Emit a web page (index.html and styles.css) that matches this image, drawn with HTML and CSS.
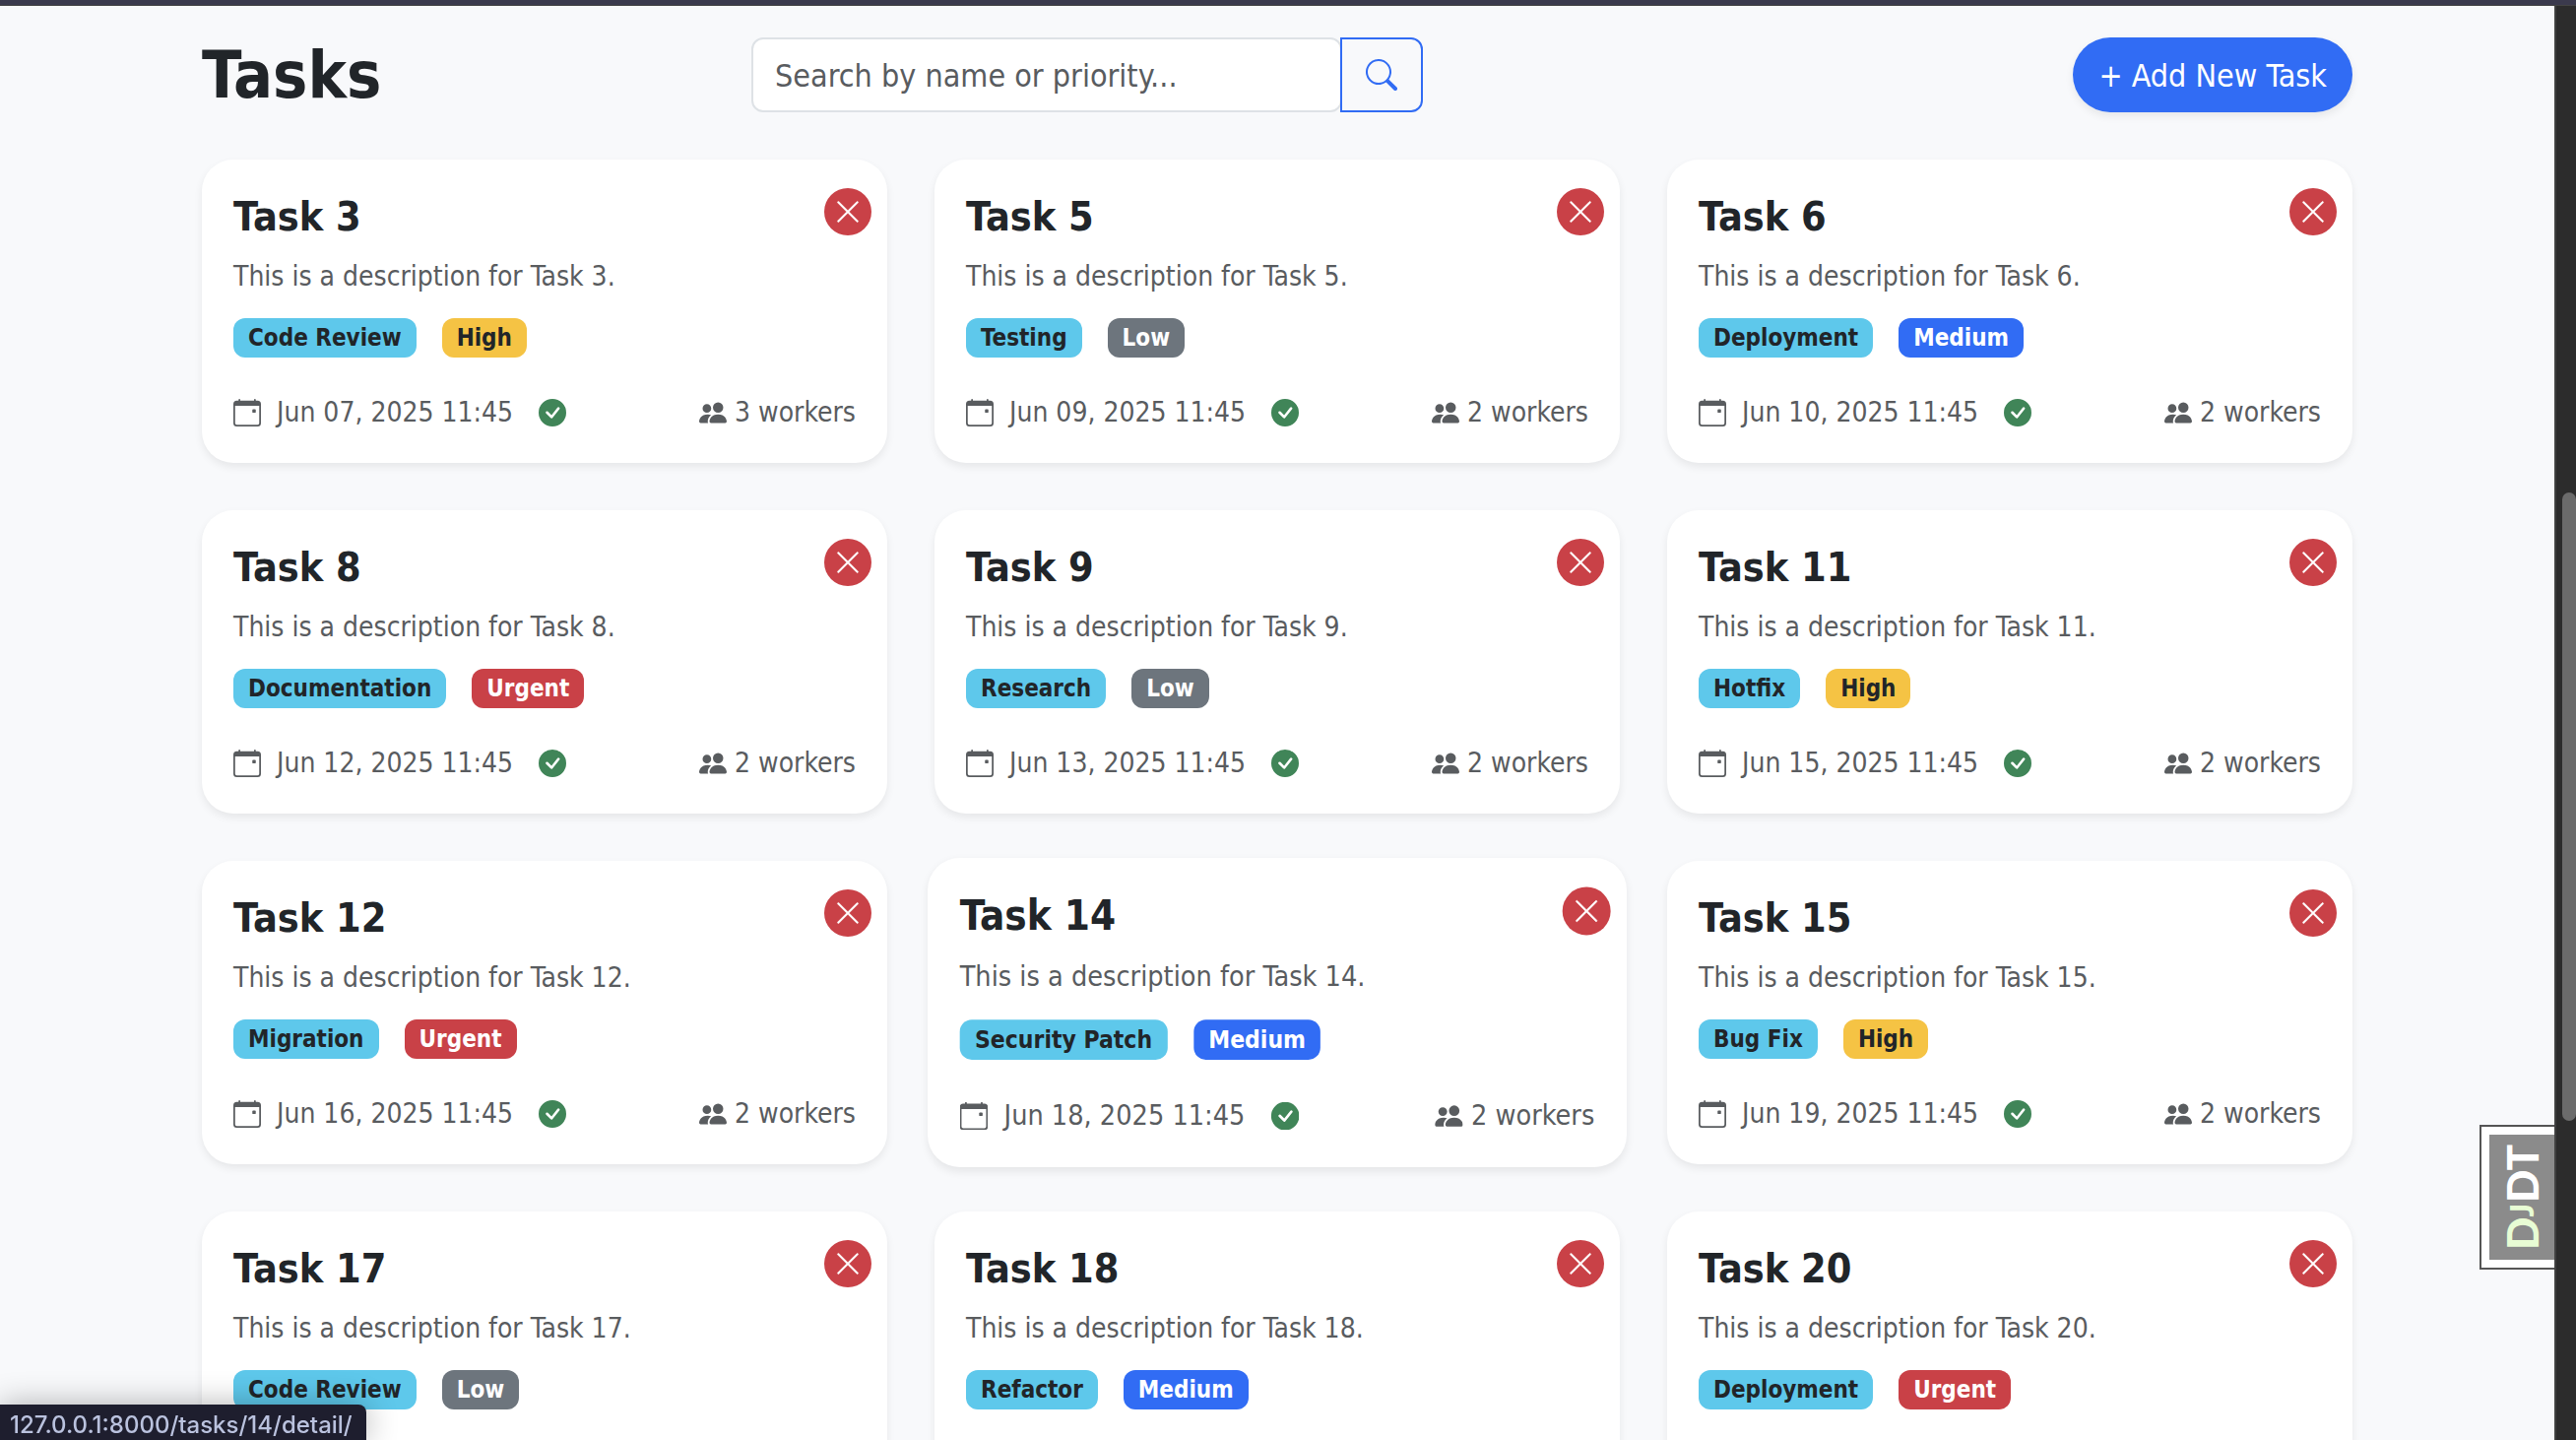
FILE: index.html
```html
<!DOCTYPE html>
<html lang="en">
<head>
<meta charset="utf-8">
<title>Tasks</title>
<link rel="stylesheet" href="styles.css">
</head>
<body>
<svg class="sprite" aria-hidden="true">
  <symbol id="calendar" viewBox="0 0 16 16"><path d="M11 6.500a.5.5 0 0 1 .5-.5h1a.5.5 0 0 1 .5.5v1a.5.5 0 0 1-.5.5h-1a.5.5 0 0 1-.5-.5z"/><path d="M3.500 0a.5.5 0 0 1 .5.5V1h8V.5a.5.5 0 0 1 1 0V1h1a2 2 0 0 1 2 2v11a2 2 0 0 1-2 2H2a2 2 0 0 1-2-2V3a2 2 0 0 1 2-2h1V.5a.5.5 0 0 1 .5-.5M1 4v10a1 1 0 0 0 1 1h12a1 1 0 0 0 1-1V4z"/></symbol>
  <symbol id="check" viewBox="0 0 16 16"><path d="M16 8A8 8 0 1 1 0 8a8 8 0 0 1 16 0m-3.970-3.030a.75.75 0 0 0-1.080.022L7.477 9.417 5.384 7.323a.75.75 0 0 0-1.060 1.060L6.970 11.030a.75.75 0 0 0 1.079-.02l3.992-4.990a.75.75 0 0 0-.01-1.050z"/></symbol>
  <symbol id="people" viewBox="0 0 16 16"><path d="M7 14s-1 0-1-1 1-4 5-4 5 3 5 4-1 1-1 1zm4-6a3 3 0 1 0 0-6 3 3 0 0 0 0 6m-5.784 6A2.240 2.240 0 0 1 5 13c0-1.355.68-2.750 1.936-3.720A6.300 6.300 0 0 0 5 9c-4 0-5 3-5 4s1 1 1 1zM4.500 8a2.500 2.500 0 1 0 0-5 2.500 2.500 0 0 0 0 5"/></symbol>
  <symbol id="search" viewBox="0 0 16 16"><path d="M11.742 10.344a6.500 6.500 0 1 0-1.397 1.398h-.001q.044.06.098.115l3.850 3.850a1 1 0 0 0 1.415-1.414l-3.850-3.850a1 1 0 0 0-.115-.1zM12 6.500a5.500 5.500 0 1 1-11 0 5.500 5.500 0 0 1 11 0"/></symbol>
  <symbol id="cross" viewBox="0 0 16 16"><path d="M2.146 2.854a.5.5 0 1 1 .708-.708L8 7.293l5.146-5.147a.5.5 0 0 1 .708.708L8.707 8l5.147 5.146a.5.5 0 0 1-.708.708L8 8.707l-5.146 5.147a.5.5 0 0 1-.708-.708L7.293 8z"/></symbol>
</svg>
<div class="topbar"></div>
<div class="viewport">
  <main class="container">
    <header class="header">
      <h1>Tasks</h1>
      <form class="search">
        <input type="text" aria-label="Search tasks" placeholder="Search by name or priority...">
        <button type="button" aria-label="Search"><svg><use href="#search"/></svg></button>
      </form>
      <a class="add" href="#">+ Add New Task</a>
    </header>
    <section class="grid">
      <article class="card">
        <h2>Task 3</h2><button class="delete" aria-label="Delete Task 3"><svg><use href="#cross"/></svg></button>
        <p>This is a description for Task 3.</p>
        <div class="badges"><span class="badge info">Code Review</span><span class="badge warning">High</span></div>
        <footer><svg><use href="#calendar"/></svg><time>Jun 07, 2025 11:45</time><svg class="done"><use href="#check"/></svg><span class="workers"><svg><use href="#people"/></svg>3 workers</span></footer>
      </article>
      <article class="card">
        <h2>Task 5</h2><button class="delete" aria-label="Delete Task 5"><svg><use href="#cross"/></svg></button>
        <p>This is a description for Task 5.</p>
        <div class="badges"><span class="badge info">Testing</span><span class="badge secondary">Low</span></div>
        <footer><svg><use href="#calendar"/></svg><time>Jun 09, 2025 11:45</time><svg class="done"><use href="#check"/></svg><span class="workers"><svg><use href="#people"/></svg>2 workers</span></footer>
      </article>
      <article class="card">
        <h2>Task 6</h2><button class="delete" aria-label="Delete Task 6"><svg><use href="#cross"/></svg></button>
        <p>This is a description for Task 6.</p>
        <div class="badges"><span class="badge info">Deployment</span><span class="badge primary">Medium</span></div>
        <footer><svg><use href="#calendar"/></svg><time>Jun 10, 2025 11:45</time><svg class="done"><use href="#check"/></svg><span class="workers"><svg><use href="#people"/></svg>2 workers</span></footer>
      </article>
      <article class="card">
        <h2>Task 8</h2><button class="delete" aria-label="Delete Task 8"><svg><use href="#cross"/></svg></button>
        <p>This is a description for Task 8.</p>
        <div class="badges"><span class="badge info">Documentation</span><span class="badge danger">Urgent</span></div>
        <footer><svg><use href="#calendar"/></svg><time>Jun 12, 2025 11:45</time><svg class="done"><use href="#check"/></svg><span class="workers"><svg><use href="#people"/></svg>2 workers</span></footer>
      </article>
      <article class="card">
        <h2>Task 9</h2><button class="delete" aria-label="Delete Task 9"><svg><use href="#cross"/></svg></button>
        <p>This is a description for Task 9.</p>
        <div class="badges"><span class="badge info">Research</span><span class="badge secondary">Low</span></div>
        <footer><svg><use href="#calendar"/></svg><time>Jun 13, 2025 11:45</time><svg class="done"><use href="#check"/></svg><span class="workers"><svg><use href="#people"/></svg>2 workers</span></footer>
      </article>
      <article class="card">
        <h2>Task 11</h2><button class="delete" aria-label="Delete Task 11"><svg><use href="#cross"/></svg></button>
        <p>This is a description for Task 11.</p>
        <div class="badges"><span class="badge info">Hotfix</span><span class="badge warning">High</span></div>
        <footer><svg><use href="#calendar"/></svg><time>Jun 15, 2025 11:45</time><svg class="done"><use href="#check"/></svg><span class="workers"><svg><use href="#people"/></svg>2 workers</span></footer>
      </article>
      <article class="card">
        <h2>Task 12</h2><button class="delete" aria-label="Delete Task 12"><svg><use href="#cross"/></svg></button>
        <p>This is a description for Task 12.</p>
        <div class="badges"><span class="badge info">Migration</span><span class="badge danger">Urgent</span></div>
        <footer><svg><use href="#calendar"/></svg><time>Jun 16, 2025 11:45</time><svg class="done"><use href="#check"/></svg><span class="workers"><svg><use href="#people"/></svg>2 workers</span></footer>
      </article>
      <article class="card active">
        <h2>Task 14</h2><button class="delete" aria-label="Delete Task 14"><svg><use href="#cross"/></svg></button>
        <p>This is a description for Task 14.</p>
        <div class="badges"><span class="badge info">Security Patch</span><span class="badge primary">Medium</span></div>
        <footer><svg><use href="#calendar"/></svg><time>Jun 18, 2025 11:45</time><svg class="done"><use href="#check"/></svg><span class="workers"><svg><use href="#people"/></svg>2 workers</span></footer>
      </article>
      <article class="card">
        <h2>Task 15</h2><button class="delete" aria-label="Delete Task 15"><svg><use href="#cross"/></svg></button>
        <p>This is a description for Task 15.</p>
        <div class="badges"><span class="badge info">Bug Fix</span><span class="badge warning">High</span></div>
        <footer><svg><use href="#calendar"/></svg><time>Jun 19, 2025 11:45</time><svg class="done"><use href="#check"/></svg><span class="workers"><svg><use href="#people"/></svg>2 workers</span></footer>
      </article>
      <article class="card">
        <h2>Task 17</h2><button class="delete" aria-label="Delete Task 17"><svg><use href="#cross"/></svg></button>
        <p>This is a description for Task 17.</p>
        <div class="badges"><span class="badge info">Code Review</span><span class="badge secondary">Low</span></div>
      </article>
      <article class="card">
        <h2>Task 18</h2><button class="delete" aria-label="Delete Task 18"><svg><use href="#cross"/></svg></button>
        <p>This is a description for Task 18.</p>
        <div class="badges"><span class="badge info">Refactor</span><span class="badge primary">Medium</span></div>
      </article>
      <article class="card">
        <h2>Task 20</h2><button class="delete" aria-label="Delete Task 20"><svg><use href="#cross"/></svg></button>
        <p>This is a description for Task 20.</p>
        <div class="badges"><span class="badge info">Deployment</span><span class="badge danger">Urgent</span></div>
      </article>
    </section>
  </main>
  <div class="scrollbar"><div class="thumb"></div></div>
</div>
<a class="debug" href="#"><span class="debug-label"><span class="dj">D<small>J</small></span>DT</span></a>
<div class="status">127.0.0.1:8000/tasks/14/detail/</div>
</body>
</html>
```
FILE: styles.css
```css
* { box-sizing: border-box; }

body {
  margin: 0;
  height: 100vh;
  overflow: hidden;
  display: flex;
  flex-direction: column;
  background: #f8f9fb;
  color: #212529;
  font-family: "DejaVu Sans Condensed", "Noto Sans", sans-serif;
  font-size: 28px;
  line-height: 42px;
}

h1, h2, p { margin: 0; }
svg { width: 28px; height: 28px; fill: currentColor; flex: none; }
.sprite { position: absolute; width: 0; height: 0; }

.topbar { flex: none; height: 6px; background: #3b3a4d; border-bottom: 1px solid #444; }
.viewport { flex: 1; min-height: 0; display: flex; overflow: hidden; }

.container {
  flex: 1;
  max-width: 2280px;
  margin: 0 auto;
  padding: 32px 48px;
}

.header {
  display: grid;
  grid-template-columns: 558fr 682fr 944fr;
  align-items: center;
  margin-bottom: 48px;
}
h1 { padding-top: 2px; font-size: 66px; line-height: 74px; font-weight: 700; }

.search { display: flex; height: 76px; }
.search input {
  flex: 1;
  min-width: 0;
  padding: 2px 24px 0 22px;
  border: 2px solid #dee2e6;
  border-radius: 12px;
  background: #fff;
  font: inherit;
  font-size: 32px;
}
.search input::placeholder { color: #595c5f; opacity: 1; }
.search button {
  width: 84px;
  margin-left: -2px;
  display: grid;
  place-items: center;
  padding: 0;
  border: 2px solid #316cf4;
  border-radius: 0 12px 12px 0;
  background: #f8f9fb;
  color: #316cf4;
}
.search svg { width: 32px; height: 32px; }

.add {
  justify-self: end;
  padding: 15px 26px 13px;
  border-radius: 38px;
  background: #316cf4;
  color: #fff;
  font-size: 32px;
  line-height: 48px;
  text-decoration: none;
  box-shadow: 0 4px 8px rgba(0, 0, 0, .075);
}

.grid {
  display: grid;
  grid-template-columns: repeat(3, 1fr);
  grid-auto-rows: minmax(308px, auto);
  gap: 48px;
}
.card {
  position: relative;
  display: flex;
  flex-direction: column;
  align-items: stretch;
  padding: 34px 32px 30px;
  border-radius: 32px;
  background: #fff;
  box-shadow: 0 4px 8px rgba(0, 0, 0, .075);
}
.card.active { transform: scale(1.02); }
.card h2 { font-size: 41px; line-height: 48px; font-weight: 700; margin-bottom: 16px; }
.card p { color: #595c5f; margin-bottom: 21px; }

.delete {
  position: absolute;
  top: 29px;
  right: 16px;
  width: 48px;
  height: 48px;
  display: grid;
  place-items: center;
  padding: 0;
  border: 0;
  border-radius: 50%;
  background: #c94147;
  color: #fff;
}
.delete svg { stroke: currentColor; stroke-width: .3; }

.badges { display: flex; gap: 26px; }
.badge {
  padding: 8px 15px;
  border-radius: 12px;
  font-size: 24px;
  line-height: 24px;
  font-weight: 700;
  color: #fff;
}
.info { background: #5ec8eb; color: #212529; }
.warning { background: #f5c344; color: #212529; }
.danger { background: #c94147; }
.secondary { background: #6d757d; }
.primary { background: #316cf4; }

.card footer { display: flex; align-items: center; margin-top: auto; color: #595c5f; }
.card time { margin: 0 26px 0 16px; }
.done { color: #408558; }
.workers { display: flex; align-items: center; gap: 8px; margin-left: auto; }

.scrollbar {
  flex: none;
  width: 22px;
  padding-left: 6px;
  border-left: 2px solid #404040;
  background: #2c2c2c;
}
.thumb { height: 638px; margin-top: 494px; border-radius: 8px; background: #6b6b6b; }

.debug {
  position: fixed;
  top: 1142px;
  right: 22px;
  padding: 8px 0 8px 8px;
  border: 2px solid #555;
  border-right: 0;
  background: #fff;
  text-decoration: none;
}
.debug-label {
  display: flex;
  align-items: center;
  justify-content: center;
  width: 66px;
  height: 127px;
  background: #8b8b8b;
  color: #fff;
  font-family: Lato, sans-serif;
  font-size: 44px;
  font-weight: 900;
  writing-mode: vertical-rl;
  transform: rotate(180deg);
}
.dj { color: #e8fcd4; }
.dj small { font-size: 32px; }

.status {
  position: fixed;
  left: 0;
  bottom: 0;
  padding: 5px 14px 0 10px;
  border-top-right-radius: 8px;
  background: #1e1e2e;
  color: #bac2de;
  font-family: Inter, sans-serif;
  font-size: 24px;
  font-weight: 500;
  line-height: 31px;
  box-shadow: 0 0 32px rgba(0, 0, 0, .3);
}
```
